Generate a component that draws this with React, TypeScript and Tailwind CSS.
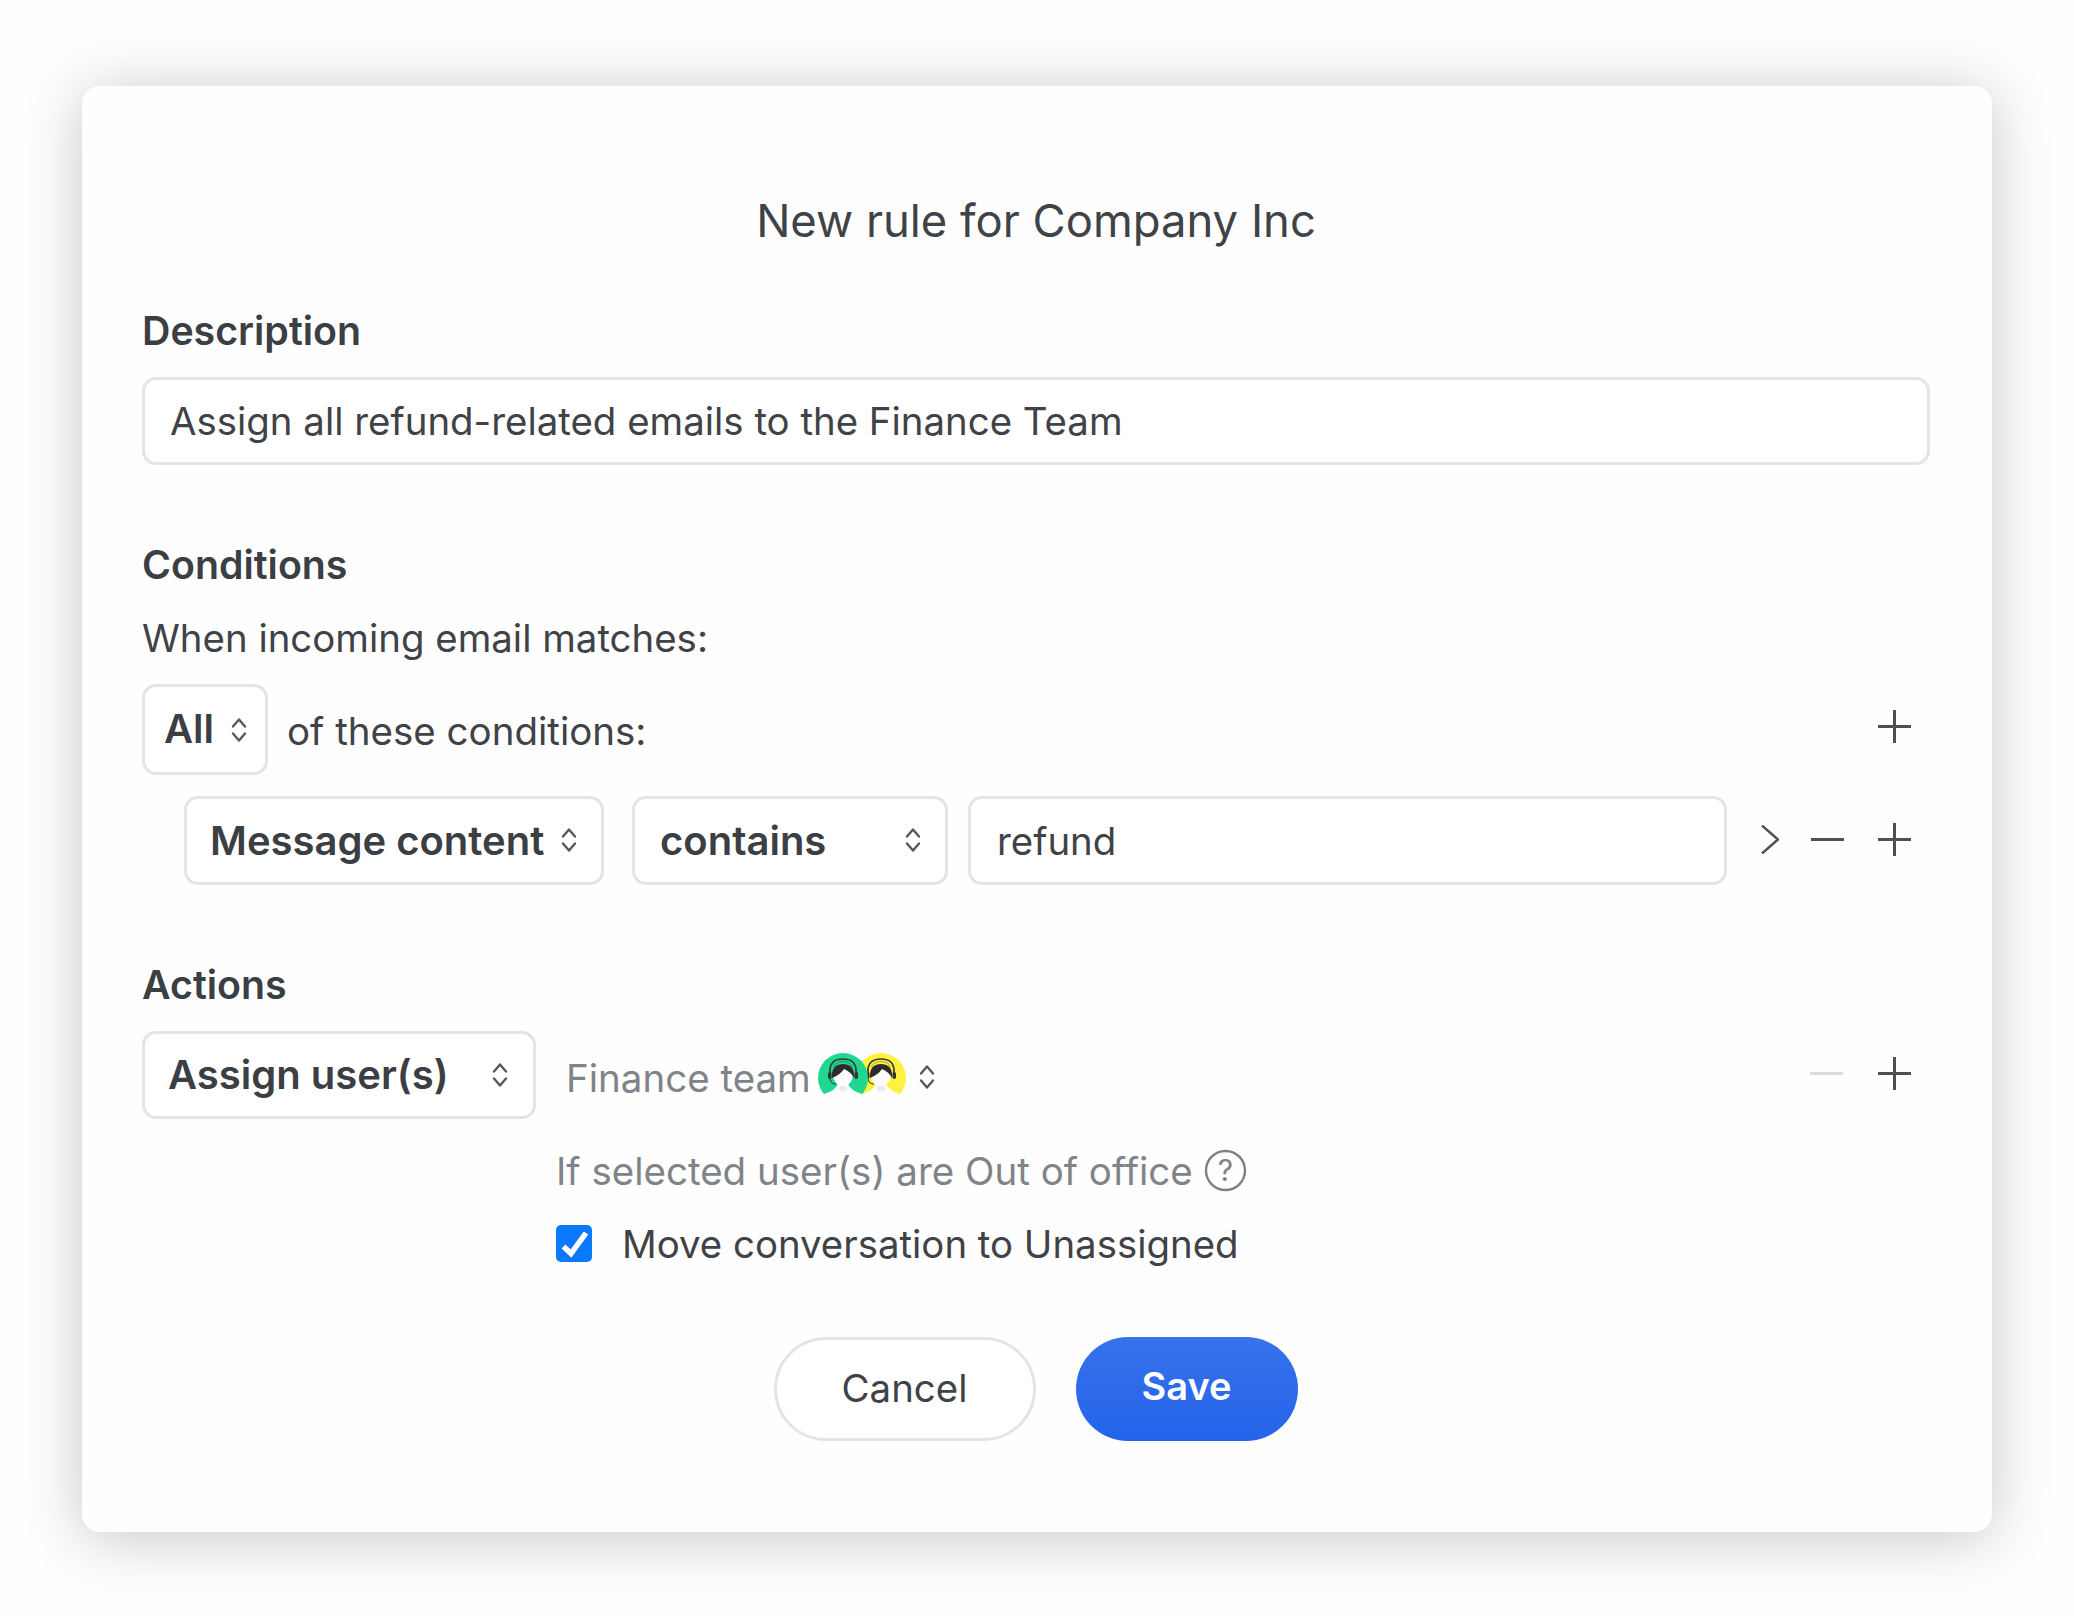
import React from "react";

const Chevrons = ({ className = "" }: { className?: string }) => (
  <svg width="18" height="26" viewBox="0 0 18 26" fill="none" stroke="#55585c" strokeWidth="2.4" strokeLinecap="round" strokeLinejoin="round" className={`shrink-0 ${className}`}>
    <path d="M3 9.5 9 2.5l6 7" />
    <path d="M3 16.5l6 7 6-7" />
  </svg>
);

const Plus = () => (
  <svg width="33" height="33" viewBox="0 0 33 33" stroke="#4d5055" strokeWidth="3" className="shrink-0">
    <path d="M0 16.5h33M16.5 0v33" />
  </svg>
);

const Minus = ({ muted = false }: { muted?: boolean }) => (
  <svg width="33" height="33" viewBox="0 0 33 33" stroke={muted ? "#dcdcdc" : "#4d5055"} strokeWidth="3" className="shrink-0">
    <path d="M0 16.5h33" />
  </svg>
);

const Avatars = () => (
  <svg width="90" height="44" viewBox="0 0 90 44" className="shrink-0">
    <defs>
      <clipPath id="a1"><circle cx="64" cy="25" r="25" /></clipPath>
      <clipPath id="a2"><circle cx="26" cy="25" r="25" /></clipPath>
    </defs>
    {[{ cx: 64, c: "#fdf23f", id: "a1" }, { cx: 26, c: "#1fd78f", id: "a2" }].map(({ cx, c, id }) => (
      <g key={id}>
        <g clipPath={`url(#${id})`}>
          <rect x={cx - 25} y="0" width="50" height="50" fill={c} />
          <path d={`M${cx - 32} 46 L${cx - 19} 41 Q${cx - 8} 38 ${cx - 5} 31 h10 Q${cx + 8} 38 ${cx + 19} 41 L${cx + 32} 46 V50 H${cx - 32}Z`} fill="#ffffff" />
        </g>
        <ellipse cx={cx} cy="35.5" rx="4.5" ry="3" fill="#ececec" />
        <ellipse cx={cx} cy="22" rx="10" ry="11" fill="#fdfdfd" />
        <path d={`M${cx - 11} 25 Q${cx - 12} 11 ${cx} 11 Q${cx + 12} 11 ${cx + 11} 25 Q${cx + 8} 19 ${cx + 1} 16 Q${cx - 3} 22 ${cx - 11} 25Z`} fill="#2c2c2e" />
        <path d={`M${cx - 13} 20 Q${cx - 14} 6 ${cx} 6 Q${cx + 14} 6 ${cx + 13} 20`} fill="none" stroke="#38383a" strokeWidth="1.7" />
        <path d={`M${cx - 10} 14 Q${cx - 7} 8.5 ${cx} 8.5 Q${cx + 7} 8.5 ${cx + 10} 14`} fill="none" stroke="#38383a" strokeWidth="0.7" opacity="0.6" />
        <rect x={cx - 15} y="19" width="3.5" height="7" rx="1.7" fill="#333" />
        <rect x={cx + 11.5} y="19" width="3.5" height="7" rx="1.7" fill="#333" />
        <path d={`M${cx - 13} 26 Q${cx - 12} 31 ${cx - 7} 31`} fill="none" stroke="#3a3a3c" strokeWidth="1.2" />
      </g>
    ))}
  </svg>
);

const boxCls = "border-[3px] border-[#e4e4e4] rounded-[14px] bg-white flex items-center shrink-0";
const sectionCls = "h-[44px] leading-[44px] text-[39.3px] font-semibold text-[#3b3e43]";

export default function App() {
  return (
    <div className="w-[2074px] h-[1616px] bg-[#fefefe] pt-[86px] pl-[82px] font-['Inter','Liberation_Sans',sans-serif] text-[#3f4247] overflow-hidden">
      <div className="w-[1910px] h-[1446px] bg-[#fefefe] rounded-[18px] shadow-[0_6px_60px_rgba(0,0,0,0.22)] pl-[60px] pr-[62px] pt-[110px] flex flex-col">
        <div className="h-[50px] leading-[50px] text-[45.4px] text-center text-[#3f4247]">New rule for Company Inc</div>

        <div className={`${sectionCls} mt-[63px]`}>Description</div>
        <div className={`${boxCls} mt-[24px] h-[88px] pl-[25px] pt-[1px] text-[38.4px]`}>Assign all refund-related emails to the Finance Team</div>

        <div className={`${sectionCls} mt-[78px]`}>Conditions</div>
        <div className="h-[44px] leading-[44px] text-[38.4px] mt-[29px]">When incoming email matches:</div>

        <div className="flex items-center h-[91px] mt-[24px]">
          <div className={`${boxCls} w-[126px] h-[91px] pl-[19px] pr-[17px] justify-between text-[40px] font-semibold text-[#3b3e43]`}>
            <span className="-mt-[2px]">All</span>
            <Chevrons />
          </div>
          <span className="ml-[19px] text-[38.5px] pt-[4px]">of these conditions:</span>
          <div className="ml-auto mr-[19px] -mt-[7px] flex"><Plus /></div>
        </div>

        <div className="flex items-center h-[89px] mt-[21px] pl-[42px]">
          <div className={`${boxCls} w-[420px] h-[89px] pl-[23px] pr-[23px] justify-between text-[40px] font-semibold text-[#3b3e43]`}>
            <span>Message content</span>
            <Chevrons className="-mt-[1px]" />
          </div>
          <div className={`${boxCls} ml-[28px] w-[316px] h-[89px] pl-[25px] pr-[23px] justify-between text-[40px] font-semibold text-[#3b3e43]`}>
            <span>contains</span>
            <Chevrons className="-mt-[1px]" />
          </div>
          <div className={`${boxCls} ml-[20px] w-[759px] h-[89px] pl-[26px] text-[38.4px] pt-[2px]`}>refund</div>
          <svg width="18" height="29" viewBox="0 0 18 29" fill="none" stroke="#4d5055" strokeWidth="2.4" className="ml-[34px] -mt-[2px] shrink-0">
            <path d="M1 0.5 17 14.5 1 28.5" />
          </svg>
          <div className="ml-[32px] flex gap-[34px] -mt-[2px]"><Minus /><Plus /></div>
        </div>

        <div className={`${sectionCls} mt-[78px]`}>Actions</div>

        <div className="flex items-center h-[88px] mt-[24px]">
          <div className={`${boxCls} w-[394px] h-[88px] pl-[23px] pr-[24px] justify-between text-[40px] font-semibold text-[#3b3e43]`}>
            <span>Assign user(s)</span>
            <Chevrons className="-mt-[1px]" />
          </div>
          <span className="ml-[30px] text-[38.5px] text-[#808388] pt-[8px]">Finance team</span>
          <div className="ml-[6px] -mt-[1px]"><Avatars /></div>
          <Chevrons className="ml-[11px] mt-[4px]" />
          <div className="ml-auto mr-[19px] flex gap-[35px] -mt-[4px]"><Minus muted /><Plus /></div>
        </div>

        <div className="mt-[30px] ml-[414px] h-[44px] flex items-center text-[38.5px] text-[#808388]">
          <span className="pt-[1px]">If selected user(s) are Out of office</span>
          <svg width="43" height="43" viewBox="0 0 43 43" className="ml-[11px] -mt-[2px] shrink-0" fill="none">
            <circle cx="21.5" cy="21.5" r="19.5" stroke="#7d8085" strokeWidth="2.4" />
            <text x="21.5" y="32" textAnchor="middle" fontSize="30" fill="#7d8085" fontFamily="Inter">?</text>
          </svg>
        </div>

        <div className="mt-[30px] ml-[414px] h-[44px] flex items-center text-[38.4px]">
          <div className="w-[36px] h-[37px] rounded-[5px] bg-[#0a78ff] shrink-0 -mt-[4px]">
            <svg width="36" height="37" viewBox="0 0 36 37" fill="none" stroke="#ffffff" strokeWidth="5.5">
              <path d="M7.5 21.5 15 28.5 30 8" />
            </svg>
          </div>
          <span className="ml-[30px]">Move conversation to Unassigned</span>
        </div>

        <div className="mt-[70px] flex justify-center gap-[40px] pr-[1px]">
          <div className="w-[262px] h-[104px] rounded-full border-[3px] border-[#e4e4e4] bg-white flex items-center justify-center text-[38.4px]">Cancel</div>
          <div className="w-[222px] h-[104px] rounded-full bg-gradient-to-b from-[#3672ea] to-[#2563eb] flex items-center justify-center text-[38px] font-semibold text-white pb-[6px]">Save</div>
        </div>
      </div>
    </div>
  );
}
